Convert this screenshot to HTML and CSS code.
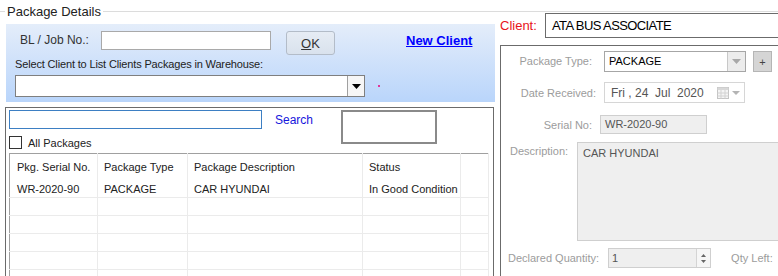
FILE: index.html
```html
<!DOCTYPE html>
<html lang="en">
<head>
    <meta charset="UTF-8">
    <meta name="viewport" content="width=device-width, initial-scale=1.0">
    <title>Package Details</title>
    <link rel="stylesheet" href="styles.css">
</head>
<body>
    <div class="window">
        <div class="groupbox">
            <span class="groupbox-title">Package Details</span>

            <div class="columns">
                <!-- Left side: lookup + package list -->
                <div class="left">
                    <div class="lookup">
                        <div class="lookup-row">
                            <label class="lookup-label" for="bl-no">BL / Job No.:</label>
                            <input type="text" id="bl-no" class="bl-input">
                            <button type="button" class="ok-btn"><u>O</u>K</button>
                            <a href="#" class="new-client">New Client</a>
                        </div>
                        <div class="lookup-hint">Select Client to List Clients Packages in Warehouse:</div>
                        <div class="combo-row">
                            <div class="combo">
                                <span class="combo-value"></span>
                                <span class="combo-btn">
                                    <svg width="9" height="5" viewBox="0 0 9 5"><path d="M0 0h9L4.5 5z" fill="#000"/></svg>
                                </span>
                            </div>
                            <span class="marker"></span>
                        </div>
                    </div>

                    <div class="packages">
                        <div class="filter">
                            <input type="text" class="search-input">
                            <a href="#" class="search-link">Search</a>
                            <div class="filter-box"></div>
                            <label class="check"><span class="check-box"></span>All Packages</label>
                        </div>

                        <table class="grid">
                            <thead>
                                <tr>
                                    <th class="col-serial">Pkg. Serial No.</th>
                                    <th class="col-type">Package Type</th>
                                    <th class="col-desc">Package Description</th>
                                    <th class="col-status">Status</th>
                                    <th></th>
                                </tr>
                            </thead>
                            <tbody>
                                <tr>
                                    <td>WR-2020-90</td>
                                    <td>PACKAGE</td>
                                    <td>CAR HYUNDAI</td>
                                    <td>In Good Condition</td>
                                    <td></td>
                                </tr>
                                <tr><td></td><td></td><td></td><td></td><td></td></tr>
                                <tr><td></td><td></td><td></td><td></td><td></td></tr>
                                <tr><td></td><td></td><td></td><td></td><td></td></tr>
                                <tr><td></td><td></td><td></td><td></td><td></td></tr>
                                <tr><td></td><td></td><td></td><td></td><td></td></tr>
                            </tbody>
                        </table>
                    </div>
                </div>

                <!-- Right side: selected package details -->
                <div class="right">
                    <div class="client-row">
                        <span class="client-label">Client:</span>
                        <div class="client-value">ATA BUS ASSOCIATE</div>
                    </div>

                    <div class="details">
                        <div class="field-row row-type">
                            <span class="field-label">Package Type:</span>
                            <div class="select">
                                <span class="select-value">PACKAGE</span>
                                <span class="select-btn">
                                    <svg width="9" height="5" viewBox="0 0 9 5"><path d="M0 0h9L4.5 5z" fill="#a8a8a8"/></svg>
                                </span>
                            </div>
                            <button type="button" class="add-btn">+</button>
                        </div>

                        <div class="field-row row-date">
                            <span class="field-label">Date Received:</span>
                            <div class="date-box">
                                <span class="date-value">Fri , 24  Jul  2020</span>
                                <svg class="cal-icon" width="12" height="12" viewBox="0 0 12 12">
                                    <rect x="0.5" y="0.5" width="11" height="11" fill="#f4f4f4" stroke="#c4c4c4"/>
                                    <rect x="0.5" y="0.5" width="11" height="2.5" fill="#d8d8d8"/>
                                    <path d="M4 3v8.5M8 3v8.5M0.5 6h11M0.5 9h11" stroke="#d2d2d2" fill="none"/>
                                </svg>
                                <svg width="8" height="4" viewBox="0 0 8 4"><path d="M0 0h8L4 4z" fill="#b4b4b4"/></svg>
                            </div>
                        </div>

                        <div class="field-row row-serial">
                            <span class="field-label">Serial No:</span>
                            <div class="readonly serial-box">WR-2020-90</div>
                        </div>

                        <div class="field-row row-desc">
                            <span class="field-label">Description:</span>
                            <div class="readonly desc-box">CAR HYUNDAI</div>
                        </div>

                        <div class="field-row row-qty">
                            <span class="field-label">Declared Quantity:</span>
                            <div class="readonly qty-box">
                                <span class="qty-value">1</span>
                                <span class="spinner">
                                    <svg width="5" height="3" viewBox="0 0 5 3"><path d="M0 3h5L2.5 0z" fill="#666"/></svg>
                                    <svg width="5" height="3" viewBox="0 0 5 3"><path d="M0 0h5L2.5 3z" fill="#666"/></svg>
                                </span>
                            </div>
                            <span class="field-label qty-left">Qty Left:</span>
                        </div>
                    </div>
                </div>
            </div>
        </div>
    </div>
</body>
</html>
```

FILE: styles.css
```css
* {
    box-sizing: border-box;
    margin: 0;
    padding: 0;
    font-family: 'Liberation Sans', Arial, sans-serif;
}

body {
    background-color: #fff;
    color: #222;
    font-size: 11px;
}

.window {
    width: 778px;
    height: 276px;
    overflow: hidden;
}

/* Group box with caption on its top border */
.groupbox {
    position: relative;
    margin-top: 11px;
    border-top: 1px solid #dcdcdc;
}

.groupbox-title {
    position: absolute;
    top: -8px;
    left: 5px;
    padding: 0 2px;
    background-color: #fff;
    font-size: 13px;
    line-height: 15px;
    color: #222;
}

.columns {
    display: flex;
}

.left {
    width: 497px;
    flex-shrink: 0;
}

/* Blue lookup panel */
.lookup {
    margin: 12px 0 0 6px;
    width: 489px;
    height: 78px;
    padding-top: 7px;
    background: linear-gradient(#e4edfa, #b9d5fb);
}

.lookup-row {
    display: flex;
    align-items: flex-start;
    height: 24px;
}

.lookup-label {
    width: 81px;
    margin-left: 14px;
    font-size: 12px;
    line-height: 19px;
    color: #333;
}

.bl-input {
    width: 170px;
    height: 19px;
    border: 1px solid #a9a9a9;
    background-color: #fff;
}

.ok-btn {
    width: 49px;
    height: 24px;
    margin-left: 15px;
    border: 1px solid #b3bcc8;
    border-radius: 3px;
    background: linear-gradient(#e6ecf4, #d9e2ed);
    font-size: 13px;
    color: #333;
}

.ok-btn u {
    text-decoration-thickness: 1px;
}

.new-client {
    margin-left: 71px;
    font-size: 13px;
    font-weight: bold;
    line-height: 19px;
    color: #0000ff;
}

.lookup-hint {
    margin: 3px 0 0 9px;
    line-height: 13px;
    letter-spacing: -0.15px;
    color: #222;
}

.combo-row {
    display: flex;
    align-items: center;
    margin: 4px 0 0 9px;
}

.combo {
    display: flex;
    width: 350px;
    height: 22px;
    border: 1px solid #7f7f7f;
    background-color: #fff;
}

.combo-value {
    flex: 1;
}

.combo-btn {
    display: flex;
    align-items: center;
    justify-content: center;
    width: 17px;
    border-left: 1px solid #a0a0a0;
    background-color: #f6f6f6;
}

.marker {
    width: 2px;
    height: 2px;
    margin-left: 13px;
    background-color: #e0379a;
}

/* Package list panel */
.packages {
    margin: 5px 0 0 5px;
    width: 489px;
    height: 180px;
    padding: 2px 3px;
    border: 1px solid #6b6b6b;
    border-bottom: none;
}

.filter {
    display: grid;
    grid-template-columns: 253px 79px 96px;
    grid-template-rows: 19px 13px;
    row-gap: 7px;
}

.search-input {
    height: 19px;
    border: 1px solid #3d7fc3;
    background-color: #fff;
}

.search-link {
    padding: 3px 0 0 13px;
    font-size: 12px;
    color: #1616dc;
    text-decoration: none;
}

.filter-box {
    grid-row: 1 / 3;
    grid-column: 3;
    height: 34px;
    border: 2px solid #8a8a8a;
}

.check {
    display: flex;
    align-items: center;
    grid-column: 1;
    grid-row: 2;
    color: #222;
}

.check-box {
    width: 13px;
    height: 13px;
    margin-right: 6px;
    border: 1px solid #333;
    background-color: #fff;
}

.grid {
    width: 480px;
    margin-top: 4px;
    border-collapse: collapse;
    border: 1px solid #a0a0a0;
    table-layout: fixed;
}

.grid th,
.grid td {
    padding: 0 6px;
    text-align: left;
    font-weight: normal;
    color: #222;
    white-space: nowrap;
    border-right: 1px solid #ebebeb;
}

.grid th {
    height: 26px;
    padding-top: 1px;
}

.grid td {
    height: 18px;
    padding-top: 2px;
    border-bottom: 1px solid #ebebeb;
}

.grid th:first-child,
.grid td:first-child {
    padding-left: 7px;
}

.col-serial { width: 88px; }
.col-type { width: 90px; }
.col-desc { width: 175px; }
.col-status { width: 98px; }

/* Right column */
.right {
    width: 300px;
    flex-shrink: 0;
    padding: 1px 0 0 3px;
}

.client-row {
    display: flex;
    align-items: center;
}

.client-label {
    width: 45px;
    font-size: 13px;
    color: #e8141b;
}

.client-value {
    flex: 1;
    height: 25px;
    padding-left: 6px;
    border: 1px solid #6b6b6b;
    font-size: 13px;
    line-height: 23px;
    letter-spacing: -0.6px;
    color: #000;
}

.details {
    height: 240px;
    margin-top: 7px;
    padding-top: 4px;
    border: 1px solid #6b6b6b;
}

.field-row {
    display: flex;
    align-items: center;
}

.field-label {
    color: #9c9c9c;
}

.row-type .field-label,
.row-serial .field-label {
    width: 91px;
    text-align: right;
}

.row-date .field-label {
    width: 95px;
    text-align: right;
}

.row-type {
    height: 22px;
}

.select {
    display: flex;
    width: 142px;
    height: 21px;
    margin-left: 12px;
    border: 1px solid #a6a6a6;
    background-color: #fff;
}

.select-value {
    flex: 1;
    padding-left: 4px;
    line-height: 19px;
    color: #000;
}

.select-btn {
    display: flex;
    align-items: center;
    justify-content: center;
    width: 18px;
    border-left: 1px solid #c8c8c8;
    background-color: #ececec;
}

.add-btn {
    width: 19px;
    height: 21px;
    margin-left: 7px;
    align-self: flex-end;
    border: 1px solid #b5b5b5;
    background-color: #d5d5d5;
    font-size: 11px;
    color: #444;
}

.row-date {
    margin-top: 10px;
}

.date-box {
    display: flex;
    align-items: center;
    width: 141px;
    height: 21px;
    margin-left: 8px;
    padding: 0 4px 0 6px;
    border: 1px solid #d6d6d6;
    background-color: #fff;
}

.date-value {
    flex: 1;
    font-size: 12px;
    white-space: pre;
    color: #555;
}

.cal-icon {
    margin-right: 3px;
}

.readonly {
    border: 1px solid #cfcfcf;
    background-color: #efefef;
    color: #555;
}

.row-serial {
    margin-top: 12px;
}

.serial-box {
    width: 107px;
    height: 19px;
    margin-left: 8px;
    padding-left: 4px;
    line-height: 17px;
}

.row-desc {
    align-items: flex-start;
    margin-top: 8px;
}

.row-desc .field-label {
    width: 67px;
    margin: 3px 0 0 9px;
}

.desc-box {
    flex: 1;
    height: 99px;
    padding: 4px 5px;
}

.row-qty {
    margin-top: 7px;
}

.row-qty .field-label {
    margin-left: 7px;
}

.qty-box {
    display: flex;
    width: 103px;
    height: 20px;
    margin-left: 9px;
}

.qty-value {
    flex: 1;
    padding-left: 3px;
    line-height: 18px;
}

.spinner {
    display: flex;
    flex-direction: column;
    align-items: center;
    justify-content: center;
    gap: 3px;
    width: 14px;
    border-left: 1px solid #d4d4d4;
    background-color: #f6f6f6;
}

.row-qty .qty-left {
    margin-left: 20px;
}
```
